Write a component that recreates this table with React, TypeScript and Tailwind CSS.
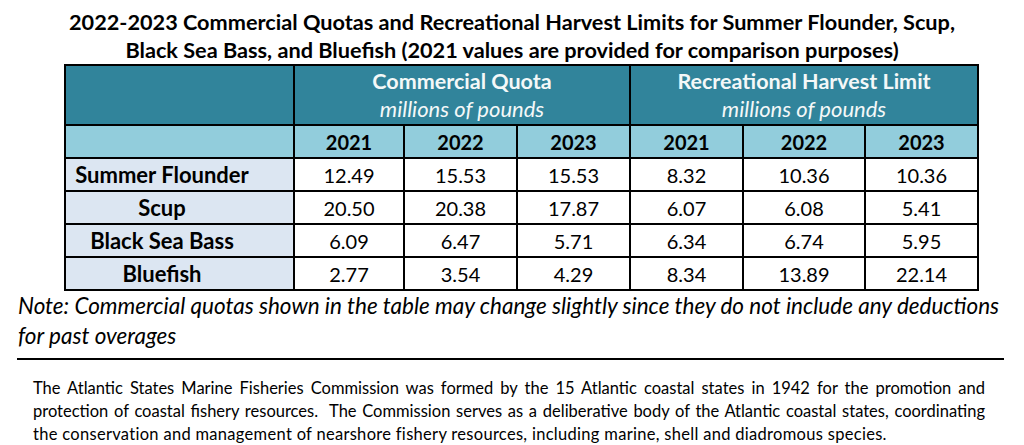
import React from "react";

const rows = [
  ["Summer Flounder", "12.49", "15.53", "15.53", "8.32", "10.36", "10.36"],
  ["Scup", "20.50", "20.38", "17.87", "6.07", "6.08", "5.41"],
  ["Black Sea Bass", "6.09", "6.47", "5.71", "6.34", "6.74", "5.95"],
  ["Bluefish", "2.77", "3.54", "4.29", "8.34", "13.89", "22.14"],
];

const widths = [229, 110, 113, 113, 113, 122, 113];

export default function App() {
  return (
    <div
      className="w-[1024px] h-[445px] bg-white text-black overflow-hidden"
      style={{ fontFamily: "Lato, 'Noto Sans', sans-serif" }}
    >
      <h1 className="pt-[8px] text-center font-bold text-[21.7px] leading-[28px] whitespace-nowrap">
        2022-2023 Commercial Quotas and Recreational Harvest Limits for Summer Flounder, Scup,
        <br />
        Black Sea Bass, and Bluefish (2021 values are provided for comparison purposes)
      </h1>
      <div className="pl-[64px]">
        <table className="border-collapse border-2 border-black table-fixed w-[913px]">
          <colgroup>
            {widths.map((w, i) => (
              <col key={i} style={{ width: w }} />
            ))}
          </colgroup>
          <thead>
            <tr className="h-[60px] bg-[#31849b] text-[#f4f8f8]">
              <th className="border-2 border-black"></th>
              <th colSpan={3} className="border-2 border-black leading-[27px] pb-[1px]">
                <div className="font-bold text-[21.5px]">Commercial Quota</div>
                <div className="italic font-normal text-[22px]">millions of pounds</div>
              </th>
              <th colSpan={3} className="border-2 border-black leading-[27px] pb-[1px]">
                <div className="font-bold text-[21.5px]">Recreational Harvest Limit</div>
                <div className="italic font-normal text-[22px]">millions of pounds</div>
              </th>
            </tr>
            <tr className="h-[33px] bg-[#92cddc] text-[20px] font-bold">
              <th className="border-2 border-black"></th>
              {["2021", "2022", "2023", "2021", "2022", "2023"].map((y, i) => (
                <th key={i} className="border-2 border-black p-0 leading-[28px]">
                  {y}
                </th>
              ))}
            </tr>
          </thead>
          <tbody>
            {rows.map((r) => (
              <tr key={r[0]} className="h-[33px]">
                <td className="border-2 border-black bg-[#dce6f2] font-bold text-[22px] text-center pl-[2px] pr-[37px] leading-[28px] whitespace-nowrap">
                  {r[0]}
                </td>
                {r.slice(1).map((v, i) => (
                  <td key={i} className="border-2 border-black text-center text-[20px] p-0 leading-[28px]">
                    {v}
                  </td>
                ))}
              </tr>
            ))}
          </tbody>
        </table>
      </div>
      <p className="px-[18px] italic text-[22.5px] leading-[30px] whitespace-nowrap">
        Note: Commercial quotas shown in the table may change slightly since they do not include any deductions
        <br />
        for past overages
      </p>
      <div className="ml-[17px] mt-[7px] w-[987px] h-[2px] bg-black"></div>
      <div className="ml-[33px] mt-[17px] w-[952px] text-[16.5px] leading-[23px]">
        <div className="whitespace-nowrap text-justify [text-align-last:justify]">
          The Atlantic States Marine Fisheries Commission was formed by the 15 Atlantic coastal states in 1942 for the promotion and
        </div>
        <div className="whitespace-nowrap text-justify [text-align-last:justify]">
          protection of coastal fishery resources.&nbsp; The Commission serves as a deliberative body of the Atlantic coastal states, coordinating
        </div>
        <div className="whitespace-nowrap tracking-[0.3px]">
          the conservation and management of nearshore fishery resources, including marine, shell and diadromous species.
        </div>
      </div>
    </div>
  );
}
